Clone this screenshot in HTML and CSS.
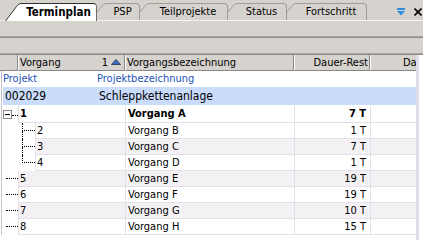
FILE: index.html
```html
<!DOCTYPE html>
<html>
<head>
<meta charset="utf-8">
<link rel="stylesheet" href="styles.css">
</head>
<body>
<div class="tabbar">
  <div class="tab active z5">
    <svg class="slant" width="16" height="18" viewBox="0 0 16 18"><path d="M0 18 L11.5 3.5 Q13.5 0.5 16 0.5 L16 18 Z" class="fill"/><path d="M0.5 18 L11.5 3.5 Q13.5 0.5 16 0.5" class="edge"/></svg>
    <span class="tab-body w1">Terminplan</span>
  </div>
  <div class="tab z4">
    <svg class="slant" width="16" height="17" viewBox="0 0 16 17"><path d="M0 17 L11.5 3.5 Q13.5 0.5 16 0.5 L16 17 Z" class="fill"/><path d="M0.5 17 L11.5 3.5 Q13.5 0.5 16 0.5" class="edge"/></svg>
    <span class="tab-body w2">PSP</span>
  </div>
  <div class="tab z3">
    <svg class="slant" width="16" height="17" viewBox="0 0 16 17"><path d="M0 17 L11.5 3.5 Q13.5 0.5 16 0.5 L16 17 Z" class="fill"/><path d="M0.5 17 L11.5 3.5 Q13.5 0.5 16 0.5" class="edge"/></svg>
    <span class="tab-body w3">Teilprojekte</span>
  </div>
  <div class="tab z2">
    <svg class="slant" width="16" height="17" viewBox="0 0 16 17"><path d="M0 17 L11.5 3.5 Q13.5 0.5 16 0.5 L16 17 Z" class="fill"/><path d="M0.5 17 L11.5 3.5 Q13.5 0.5 16 0.5" class="edge"/></svg>
    <span class="tab-body w4">Status</span>
  </div>
  <div class="tab z1">
    <svg class="slant" width="16" height="17" viewBox="0 0 16 17"><path d="M0 17 L11.5 3.5 Q13.5 0.5 16 0.5 L16 17 Z" class="fill"/><path d="M0.5 17 L11.5 3.5 Q13.5 0.5 16 0.5" class="edge"/></svg>
    <span class="tab-body w5">Fortschritt</span>
  </div>
  <div class="tools">
    <svg width="8" height="8" viewBox="0 0 8 8"><rect x="0" y="0" width="8" height="2" fill="#2c8ce0"/><path d="M0 3 L8 3 L4 7.5 Z" fill="#2c8ce0"/></svg>
    <svg width="8" height="8" viewBox="0 0 8 8"><path d="M0.5 0.5 L7.5 7.5 M7.5 0.5 L0.5 7.5" stroke="#000" stroke-width="1.6"/></svg>
  </div>
</div>
<div class="strip"></div>
<div class="strip"></div>
<div class="view">
  <div class="table">
    <div class="hdr">
      <div class="hc"></div>
      <div class="hc hc-sort"><span>Vorgang</span><span class="sort">1 <svg width="10" height="6" viewBox="0 0 10 6"><path d="M0.5 5.5 L5 0.5 L9.5 5.5 Z" fill="#3b6fc0" stroke="#1c2c50" stroke-width="0.8"/></svg></span></div>
      <div class="hc">Vorgangsbezeichnung</div>
      <div class="hc right">Dauer-Rest</div>
      <div class="hc right">Dauer</div>
    </div>
    <div class="below">
      <div class="proj-head"><span class="p1">Projekt</span><span>Projektbezeichnung</span></div>
      <div class="proj-row"><span class="p1">002029</span><span>Schleppkettenanlage</span></div>
      <div class="rows">
        <div class="row first bold">
          <div class="gut g1"><span class="minus"></span><span class="hdot"></span></div>
          <div class="c c1">1</div><div class="c c2">Vorgang A</div><div class="c c3">7 T</div><div class="c c4"></div>
        </div>
        <div class="row">
          <div class="gut g2"><span class="tee"><i class="top"></i><i class="bot"></i></span></div>
          <div class="c c1 n">2</div><div class="c c2">Vorgang B</div><div class="c c3">1 T</div><div class="c c4"></div>
        </div>
        <div class="row alt">
          <div class="gut g2"><span class="tee"><i class="top"></i><i class="bot"></i></span></div>
          <div class="c c1 n">3</div><div class="c c2">Vorgang C</div><div class="c c3">7 T</div><div class="c c4"></div>
        </div>
        <div class="row">
          <div class="gut g2"><span class="tee"><i class="top"></i></span></div>
          <div class="c c1 n">4</div><div class="c c2">Vorgang D</div><div class="c c3">1 T</div><div class="c c4"></div>
        </div>
        <div class="row alt">
          <div class="gut g3"><i class="leaf"></i></div>
          <div class="c c1">5</div><div class="c c2">Vorgang E</div><div class="c c3">19 T</div><div class="c c4"></div>
        </div>
        <div class="row">
          <div class="gut g3"><i class="leaf"></i></div>
          <div class="c c1">6</div><div class="c c2">Vorgang F</div><div class="c c3">19 T</div><div class="c c4"></div>
        </div>
        <div class="row alt">
          <div class="gut g3"><i class="leaf"></i></div>
          <div class="c c1">7</div><div class="c c2">Vorgang G</div><div class="c c3">10 T</div><div class="c c4"></div>
        </div>
        <div class="row">
          <div class="gut g3"><i class="leaf"></i></div>
          <div class="c c1">8</div><div class="c c2">Vorgang H</div><div class="c c3">15 T</div><div class="c c4"></div>
        </div>
      </div>
    </div>
  </div>
  <div class="edge-strip"></div>
</div>
</body>
</html>
```

FILE: styles.css
```css
* { box-sizing: border-box; }
html, body { margin: 0; padding: 0; }
body {
  width: 423px;
  height: 240px;
  overflow: hidden;
  background: #fff;
  font-family: "DejaVu Sans Condensed", "DejaVu Sans", sans-serif;
  font-stretch: condensed;
  font-size: 11px;
  color: #000;
}

/* tab bar */
.tabbar {
  height: 21px;
  background: #d6d2ce;
  border-bottom: 1px solid #f4f4f4;
  display: flex;
  align-items: flex-end;
  padding-left: 5px;
}
.tab {
  position: relative;
  display: flex;
  align-items: stretch;
  height: 17px;
  margin-left: -7px;
}
.tab.active {
  height: 18px;
  margin-left: 0;
  margin-bottom: -1px;
}
.z5 { z-index: 5; } .z4 { z-index: 4; } .z3 { z-index: 3; } .z2 { z-index: 2; } .z1 { z-index: 1; }
.slant { display: block; flex: none; }
.slant .fill { fill: #d6d2ce; }
.slant .edge { fill: none; stroke: #a09c9c; stroke-width: 1; }
.active .slant .fill { fill: #fff; }
.active .slant .edge { stroke: #303030; }
.tab-body {
  display: flex;
  align-items: center;
  justify-content: center;
  background: #d6d2ce;
  border-top: 1px solid #a09c9c;
  border-right: 1px solid #a09c9c;
  border-top-right-radius: 4px;
  font-size: 11px;
  padding-bottom: 1px;
}
.active .tab-body {
  background: #fff;
  border-top-color: #303030;
  border-right-color: #707070;
  font-weight: bold;
  font-size: 11.5px;
  padding-bottom: 2px;
}
.w1 { width: 76px; }
.w2 { width: 34px; }
.w3 { width: 79px; }
.w4 { width: 50px; }
.w5 { width: 71px; }
.tools {
  margin-left: auto;
  align-self: center;
  display: flex;
  gap: 9px;
  padding-right: 1px;
  padding-top: 3px;
}
.tools svg { display: block; }

/* toolbar strips */
.strip {
  height: 17px;
  background: #d6d2ce;
  border-bottom: 1px solid #8e8c8a;
  box-shadow: inset 0 -1px 0 #a8a6a4;
}

/* grid */
.view { display: flex; height: 185px; }
.table { width: 416px; overflow: hidden; flex: none; }
.edge-strip { width: 3px; background: #e2dee6; }

.hdr {
  display: grid;
  grid-template-columns: 18px 107px 169px 76px 66px;
  height: 16px;
  background: #d6d2ce;
  width: 436px;
}
.hc {
  border-left: 1px solid #fff;
  border-right: 1px solid #8a8886;
  border-bottom: 1px solid #8a8886;
  padding: 0 1px;
  line-height: 15px;
  white-space: nowrap;
  overflow: hidden;
}
.hc:first-child { border-left: 0; }
.hc-sort { display: flex; justify-content: space-between; padding-right: 3px; }
.sort { display: flex; align-items: center; gap: 3px; }
.sort svg { display: block; margin-top: -1px; }
.right { text-align: right; }
.hc.right:last-child { padding-right: 2px; }

.below {
  margin-left: 1px;
  border-left: 1px solid #c6c2ca;
}
.proj-head {
  height: 16px;
  line-height: 16px;
  color: #2454b8;
  display: flex;
  padding-left: 1px;
}
.p1 { width: 94px; flex: none; }
.proj-row {
  height: 18px;
  line-height: 18px;
  margin-left: 1px;
  background: #cadcfc;
  display: flex;
  padding-left: 2px;
  font-size: 12px;
}
.rows { border-top: 1px solid #fff; }
.row { display: flex; height: 16px; }
.row.first { height: 17px; }
.bold { font-weight: bold; }
.gut { flex: none; height: 100%; display: flex; align-items: flex-start; }
.g1 { width: 16px; padding-left: 1px; align-items: center; }
.g2 { width: 33px; padding-left: 20px; }
.g3 { width: 16px; padding-left: 4px; }
.minus {
  width: 9px; height: 9px;
  border: 1px solid #8c8c8c;
  background: #fff;
  flex: none;
  background-image: linear-gradient(#000, #000);
  background-size: 5px 1px;
  background-position: center;
  background-repeat: no-repeat;
}
.hdot { flex: 1; border-top: 1px dotted #000; height: 0; margin-top: 1px; }
.tee { display: flex; flex-direction: column; width: 13px; height: 100%; }
.tee i { display: block; border-left: 1px dotted #000; }
.tee .top { height: 8px; border-bottom: 1px dotted #000; }
.tee .bot { flex: 1; }
.leaf { display: block; width: 12px; height: 8px; border-bottom: 1px dotted #000; }

.c {
  border-left: 1px solid #e4e0e8;
  border-bottom: 1px solid #e4e0e8;
  line-height: 15px;
  white-space: nowrap;
  overflow: hidden;
}
.c1 { width: 107px; padding-left: 1px; }
.c1.n { width: 90px; }
.c2 { width: 169px; padding-left: 2px; }
.c3 { width: 76px; text-align: right; padding-right: 4px; }
.c4 { flex: 1; }
.alt .c { background: #f3f1f3; }
.first .c { line-height: 16px; }
```
